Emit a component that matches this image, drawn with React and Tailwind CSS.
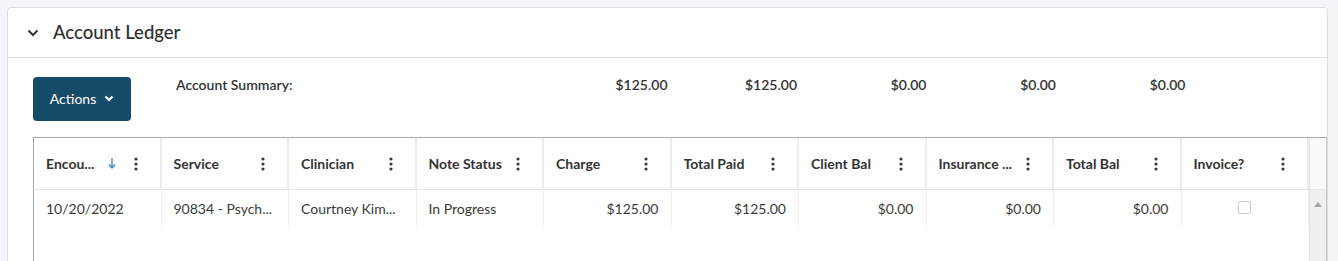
import React from 'react';

const Kebab = () => (
  <svg width="4" height="14" viewBox="0 0 4 14" className="block">
    <circle cx="2" cy="2" r="1.6" fill="#3a3a3a" />
    <circle cx="2" cy="7" r="1.6" fill="#3a3a3a" />
    <circle cx="2" cy="12" r="1.6" fill="#3a3a3a" />
  </svg>
);

const SortDown = () => (
  <svg width="8" height="11" viewBox="0 0 8 11" className="block">
    <line x1="4" y1="0" x2="4" y2="9" stroke="#2f7fc1" strokeWidth="1.3" />
    <path d="M1 6.5 L4 10 L7 6.5" fill="none" stroke="#2f7fc1" strokeWidth="1.3" />
  </svg>
);

const AccountLedger = () => {
  const columns = [
    { label: 'Encou...', sort: true },
    { label: 'Service' },
    { label: 'Clinician' },
    { label: 'Note Status' },
    { label: 'Charge' },
    { label: 'Total Paid' },
    { label: 'Client Bal' },
    { label: 'Insurance ...' },
    { label: 'Total Bal' },
    { label: 'Invoice?' },
  ];

  const row = [
    { v: '10/20/2022' },
    { v: '90834 - Psych...' },
    { v: 'Courtney Kim...' },
    { v: 'In Progress' },
    { v: '$125.00', right: true },
    { v: '$125.00', right: true },
    { v: '$0.00', right: true },
    { v: '$0.00', right: true },
    { v: '$0.00', right: true },
    { check: true },
  ];

  const summary = ['$125.00', '$125.00', '$0.00', '$0.00', '$0.00'];

  return (
    <div className="min-h-[261px] bg-[#f4f5f9] pl-[7px] pt-[7px] pr-[10px] font-['Lato','Liberation_Sans',sans-serif] text-[#333]">
      <div className="bg-white border border-[#dcdde3] rounded-t-[4px] w-[1321px] h-[260px] overflow-hidden">
        <div className="h-[50px] flex items-center border-b border-[#dcdde3] pl-[19px]">
          <svg width="12" height="8" viewBox="0 0 12 8" className="block">
            <path d="M1.5 1.5 L6 6 L10.5 1.5" fill="none" stroke="#333" strokeWidth="2" />
          </svg>
          <h2 className="ml-[14px] text-[18.5px] font-medium text-[#2f2f2f]">Account Ledger</h2>
        </div>

        <div className="pl-[25px] pt-[19px]">
          <div className="flex items-start">
            <button className="w-[98px] h-[44px] bg-[#174b6a] rounded-[4px] flex items-center justify-center gap-[8px] pb-[2px] text-white text-[14px]">
              Actions
              <svg width="10" height="7" viewBox="0 0 10 7" className="block">
                <path d="M1.5 1.5 L5 5 L8.5 1.5" fill="none" stroke="#fff" strokeWidth="2.2" />
              </svg>
            </button>
            <div className="ml-[45px] w-[362px] text-[14px] font-semibold leading-[16px] text-[#333]">Account Summary:</div>
            {summary.map((s, i) => (
              <div key={i} className="w-[129.5px] text-right text-[14px] font-semibold leading-[16px] text-[#333]">{s}</div>
            ))}
          </div>

          <div className="mt-[16px] border border-[#a5a9ad] border-r-[#c5c8cb] flex h-[140px]">
            <div className="flex-1 flex flex-col">
              <div className="grid grid-cols-10 h-[52px] border-b border-[#e6e6e6]">
                {columns.map((c, i) => (
                  <div key={i} className="flex items-center pl-[12px] pr-[12px] border-r-2 border-[#ececec]">
                    <span className="flex-1 text-[14px] font-bold text-[#333] whitespace-nowrap overflow-hidden">{c.label}</span>
                    {c.sort && (
                      <span className="w-[24px] flex justify-center">
                        <SortDown />
                      </span>
                    )}
                    <span className="w-[24px] flex justify-center">
                      <Kebab />
                    </span>
                  </div>
                ))}
              </div>
              <div className="grid grid-cols-10 h-[37px]">
                {row.map((c, i) => (
                  <div
                    key={i}
                    className={`flex items-center px-[12px] border-r border-[#ececec] text-[14px] text-[#3a3a3a] whitespace-nowrap ${c.right ? 'justify-end' : ''} ${c.check ? 'justify-center' : ''}`}
                  >
                    {c.check ? (
                      <span className="w-[13px] h-[13px] border border-[#c9c9c9] rounded-[2px] bg-white -mt-[2px]" />
                    ) : (
                      c.v
                    )}
                  </div>
                ))}
              </div>
            </div>
            <div className="w-[17px] flex flex-col border-l border-[#e4e4e4]">
              <div className="h-[52px] bg-[#fafafa] border-b border-[#e4e4e4]" />
              <div className="flex-1 bg-[#f0f0f0] flex justify-center pt-[12px]">
                <svg width="8" height="5" viewBox="0 0 8 5" className="block">
                  <path d="M0 5 L4 0 L8 5 Z" fill="#a3a3a3" />
                </svg>
              </div>
            </div>
          </div>
        </div>
      </div>
    </div>
  );
};

export default AccountLedger;
